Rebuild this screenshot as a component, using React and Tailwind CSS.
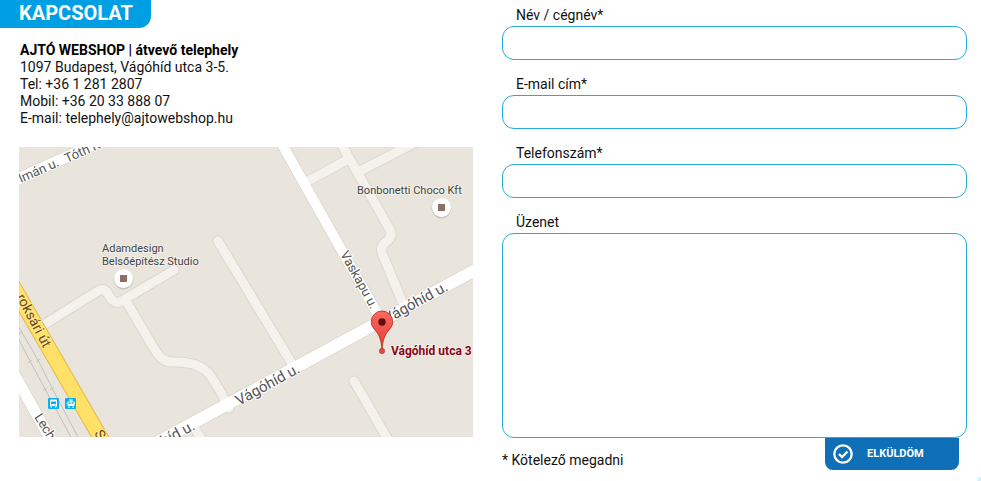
import React from "react";

const minorRoads = [
  "M308 181 L347 160",
  "M360 171 L418 141",
  "M339 140 L389 228 Q394 236 386 242 Q380 246 382 253 L404 306",
  "M218 241 L294 367",
  "M354 381 L390 443",
  "M40 327 L98 291 Q105 287 108 294 Q113 304 120 302 L174 270",
  "M126 301 L155 350 Q162 362 172 362 Q194 361 205 370 Q213 376 229 408",
  "M194 427 L204 444",
];
const mainRoads = [
  { d: "M130 457 L490 262", w: 12 },
  { d: "M278 137 L382 322", w: 10 },
  { d: "M5 185 L110 137", w: 11 },
  { d: "M8 363 L56 449", w: 11 },
];
const streets = [
  { text: "lmán u.", x: 21, y: 183, angle: -24, size: 13 },
  { text: "Tóth K", x: 67, y: 163, angle: -24, size: 13 },
  { text: "Vágóhíd u.", x: 239, y: 406, angle: -29, size: 15 },
  { text: "Vágóhíd u.", x: 387, y: 324, angle: -29, size: 15 },
  { text: "Vágóhíd u.", x: 134, y: 463, angle: -29, size: 15 },
  { text: "Vaskapu u.", x: 340, y: 254, angle: 61, size: 13 },
  { text: "Lechner", x: 34, y: 417, angle: 58, size: 13 },
];

function Poi({ x, y }) {
  return (
    <g>
      <circle cx={x} cy={y + 1} r="10" fill="#cbc6bc" />
      <circle cx={x} cy={y} r="9.5" fill="#fff" />
      <rect x={x - 3.5} y={y - 3.5} width="7" height="7" fill="#8d6e67" />
    </g>
  );
}

function Map() {
  return (
    <svg
      viewBox="19 147 454 290"
      role="img"
      aria-label="Vágóhíd utca 3"
      className="block w-full font-['Roboto',sans-serif]"
    >
      <rect x="19" y="147" width="454" height="290" fill="#e9e5dc" />
      <g fill="none" strokeLinecap="round" strokeLinejoin="round">
        {minorRoads.map((d) => (
          <path key={d} d={d} stroke="#dcd8cf" strokeWidth="11" />
        ))}
        {mainRoads.map((r) => (
          <path key={r.d} d={r.d} stroke="#dad6cc" strokeWidth={r.w + 1.5} />
        ))}
        {minorRoads.map((d) => (
          <path key={d} d={d} stroke="#f5f2ed" strokeWidth="9" />
        ))}
        {mainRoads.map((r) => (
          <path key={r.d} d={r.d} stroke="#fff" strokeWidth={r.w} />
        ))}
        <g stroke="#c3c1be" strokeWidth="1">
          <path d="M17 324 L38 360 L52 388 L79 439" />
          <path d="M17 336 L30 361 L45 389 L72 439" />
          <path d="M36.500 361.500l3-2M28.500 362.500l3-2M50.500 389.500l3-2M43.500 390.500l3-2M19 334l3-2" />
        </g>
        <path d="M2 267 L110 454" stroke="#e3b84a" strokeWidth="16" />
        <path d="M2 267 L110 454" stroke="#ffe168" strokeWidth="14" />
      </g>

      {streets.map((s) => (
        <text
          key={`${s.text}${s.x}`}
          transform={`translate(${s.x} ${s.y}) rotate(${s.angle})`}
          fontSize={s.size}
          fill="#555"
          stroke="#fff"
          strokeWidth="2"
          strokeLinejoin="round"
          paintOrder="stroke"
        >
          {s.text}
        </text>
      ))}
      <g fontSize="14" fill="#6a4512" stroke="#ffe98f" strokeWidth="2" paintOrder="stroke">
        <text transform="translate(16 297) rotate(62)">roksári út</text>
        <text transform="translate(94 433) rotate(62)">Soroksári út</text>
      </g>

      <g fontSize="11" fill="#444" stroke="#f3f0ea" strokeWidth="2" paintOrder="stroke">
        <text x="102" y="252">Adamdesign</text>
        <text x="102" y="265">Belsőépítész Studio</text>
        <text x="357" y="194">Bonbonetti Choco Kft</text>
      </g>
      <Poi x={123.5} y={278.5} />
      <Poi x={441.5} y={207.5} />

      <g>
        <rect x="48" y="398" width="11" height="11" rx="1" fill="#0aaef5" />
        <path d="M50 400.500q0-1 1-1h5q1 0 1 1V406H50z" fill="#fff" />
        <path d="M51 401.500h5v2.500h-5zM51 404.700h1v.8h-1zM55 404.700h1v.8h-1z" fill="#0aaef5" />
        <path d="M50.500 406h1.500v1.500h-1.500zM55 406h1.500v1.500H55z" fill="#fff" />
        <rect x="65" y="398" width="11" height="11" rx="1" fill="#0aaef5" />
        <path d="M67.500 401.500h7v4.500h-7zM66.500 403h8.500v1h-8.500zM69 399.500h4v1h-4zM70.500 400h1v2h-1zM68 406.800h2v1h-2zM72 406.800h2v1h-2z" fill="#fff" />
        <path d="M68.500 402.300h2v1.500h-2zM71.500 402.300h2v1.500h-2z" fill="#0aaef5" />
      </g>

      <defs>
        <linearGradient id="pin" x1="0" y1="0" x2="0" y2="1">
          <stop offset="0" stopColor="#fb6a62" />
          <stop offset="1" stopColor="#e53a33" />
        </linearGradient>
      </defs>
      <circle cx="382" cy="351" r="2.7" fill="#dd4b46" stroke="#a83a36" strokeWidth="0.6" />
      <path
        d="M382 349 C381 338 378.500 334 375 330 C372.500 327 371.300 325 371.300 321.700 A10.700 10.700 0 0 1 392.700 321.700 C392.700 325 391.500 327 389 330 C385.500 334 383 338 382 349Z"
        fill="url(#pin)"
        stroke="#b5332d"
        strokeWidth="0.9"
      />
      <circle cx="382" cy="322" r="3.700" fill="#5f0f0c" />
      <text x="391" y="355" fontSize="12" fontWeight="700" fill="#8a0713" stroke="#f3efe9" strokeWidth="2" paintOrder="stroke">
        Vágóhíd utca 3
      </text>
    </svg>
  );
}

function Field({ id, label, type }) {
  return (
    <div className="flex flex-col">
      <label htmlFor={id} className="pl-3.5 leading-[22px]">{label}</label>
      <input
        id={id}
        type={type}
        required
        className="h-[34px] w-full rounded-xl border border-[#27aae1] bg-white px-3 outline-none"
      />
    </div>
  );
}

export default function App() {
  return (
    <main className="relative grid min-h-screen grid-cols-[473fr_465fr] items-start gap-x-[29px] overflow-hidden bg-white pr-3.5 font-['Roboto',sans-serif] text-sm text-[#111]">
      <section>
        <h1 className="inline-block rounded-br-xl bg-[#009fe3] pr-[18px] pl-[19px] align-top text-xl leading-[27px] h-7 font-bold text-white">
          KAPCSOLAT
        </h1>
        <address className="mt-3.5 pl-5 leading-[17px] not-italic">
          <strong className="block font-bold text-black">AJTÓ WEBSHOP | átvevő telephely</strong>
          <p>1097 Budapest, Vágóhíd utca 3-5.</p>
          <p>Tel: +36 1 281 2807</p>
          <p>Mobil: +36 20 33 888 07</p>
          <p>E-mail: <a href="mailto:telephely@ajtowebshop.hu">telephely@ajtowebshop.hu</a></p>
        </address>
        <div className="mt-5 pl-[19px]">
          <Map />
        </div>
      </section>

      <form className="flex flex-col gap-[13px] pt-1" onSubmit={(e) => e.preventDefault()}>
        <Field id="name" label="Név / cégnév*" type="text" />
        <Field id="email" label="E-mail cím*" type="email" />
        <Field id="phone" label="Telefonszám*" type="tel" />
        <div className="flex flex-col">
          <label htmlFor="message" className="pl-3.5 leading-[22px]">Üzenet</label>
          <textarea
            id="message"
            className="h-[205px] w-full resize-none rounded-xl border border-[#27aae1] bg-white p-3 outline-none"
          />
          <div className="flex items-start justify-between pr-2">
            <p className="pt-3 leading-5">* Kötelező megadni</p>
            <button
              type="submit"
              className="flex h-8 w-[134px] items-center gap-3.5 rounded-b-lg bg-[#0f70b7] pl-2 text-[11px] font-bold text-white"
            >
              <svg viewBox="0 0 20 20" className="size-5" fill="none" stroke="currentColor" aria-hidden="true">
                <circle cx="10" cy="10" r="8.700" strokeWidth="2.300" />
                <path d="M6 10l3 3 5.500-5.500" strokeWidth="2.400" />
              </svg>
              ELKÜLDÖM
            </button>
          </div>
        </div>
      </form>
      <span className="absolute right-0 bottom-0 size-1 rounded-tl-full bg-[#d5f1fb]" />
    </main>
  );
}
